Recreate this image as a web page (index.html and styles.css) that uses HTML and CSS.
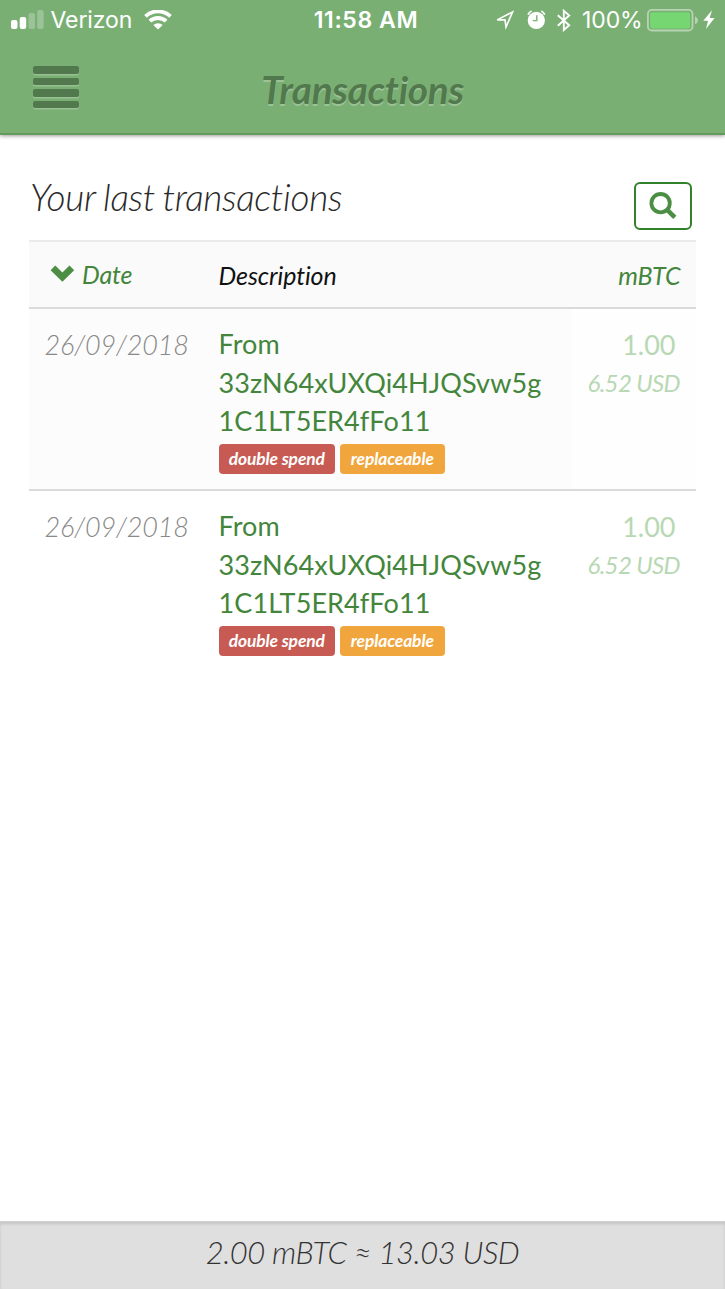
FILE: index.html
```html
<!DOCTYPE html>
<html lang="en">
<head>
<meta charset="utf-8">
<title>Transactions</title>
<link rel="stylesheet" href="styles.css">
</head>
<body>
<div class="app">
  <header class="header">
    <div class="status">
      <div class="status-left">
        <svg class="signal" width="33" height="20" viewBox="0 0 33 20" fill="#fff">
          <rect x="0" y="10" width="6.5" height="9" rx="2"/>
          <rect x="8.7" y="7" width="6.5" height="12" rx="2"/>
          <rect x="17.5" y="3" width="6.5" height="16" rx="2" opacity=".25"/>
          <rect x="26.2" y="0" width="6.5" height="19" rx="2" opacity=".25"/>
        </svg>
        <span class="carrier">Verizon</span>
        <svg class="wifi" width="28" height="20" viewBox="0 0 28 20" fill="none" stroke="#fff" stroke-width="3.8">
          <path d="M1.5 6.4A18 18 0 0 1 26.5 6.4"/>
          <path d="M5.9 11.2A11.8 11.8 0 0 1 22.1 11.2"/>
          <path d="M9.3 15.1A6.7 6.7 0 0 1 18.7 15.1L14 19.6Z" fill="#fff" stroke="none"/>
        </svg>
      </div>
      <span class="clock">11:58 AM</span>
      <div class="status-right">
        <svg class="location" width="19" height="20" viewBox="0 0 19 20" fill="none" stroke="#fff" stroke-width="1.6">
          <path d="M16.6 1.9L10 17L9 9.9H1.2Z"/>
        </svg>
        <svg class="alarm" width="19" height="20" viewBox="0 0 19 20">
          <circle cx="9.3" cy="10.4" r="8.6" fill="#fff"/>
          <path d="M9.8 5.2V10.6H5.8" fill="none" stroke="#78af73" stroke-width="1.4"/>
          <path d="M.9 4.6A8 8 0 0 1 4.6 1M14.2 1A8 8 0 0 1 17.8 4.6" fill="none" stroke="#fff" stroke-width="1.7"/>
        </svg>
        <svg class="bluetooth" width="14" height="23" viewBox="0 0 14 23" fill="none" stroke="#fff" stroke-width="1.9">
          <path d="M.8 6.2L12.2 16.2L6.8 21V1.8L12.2 6.5L.8 16.7"/>
        </svg>
        <span class="percent">100%</span>
        <svg class="battery" width="52" height="23" viewBox="0 0 52 23">
          <rect x=".9" y=".9" width="44.6" height="20.6" rx="4" fill="none" stroke="#fff" stroke-opacity=".45" stroke-width="1.8"/>
          <rect x="3.2" y="3.2" width="39.8" height="16.2" rx="2" fill="#76d672"/>
          <path d="M48 7.2Q51 8.7 51 11.2T48 15.2Z" fill="#fff" opacity=".45"/>
        </svg>
        <svg class="bolt" width="12" height="20" viewBox="0 0 12 20" fill="#fff"><path d="M9 .3L.3 10.8H5L3 19L11.6 8H6.7Z"/></svg>
      </div>
    </div>
    <div class="title-bar">
      <div class="menu"><i class="bar"></i><i class="bar"></i><i class="bar"></i><i class="bar"></i></div>
      <h1 class="title">Transactions</h1>
    </div>
  </header>
  <main class="content">
    <div class="heading">
      <h2 class="subtitle">Your last transactions</h2>
      <button class="search" aria-label="Search">
        <svg width="28" height="28" viewBox="0 0 28 28" fill="none" stroke="#4d8e45">
          <circle cx="11.6" cy="11.2" r="9.2" stroke-width="3.8"/>
          <path d="M18 17.6L25.8 25.4" stroke-width="4.6"/>
        </svg>
      </button>
    </div>
    <div class="row head">
      <div class="cell sort">
        <svg class="chevron" width="25" height="17" viewBox="0 0 25 17"><path d="M.6 5.2L5.3.5L12.4 7.5L19.5.5L24.2 5.2L12.4 16.8Z" fill="#4d8e45"/></svg>
        <span class="date-label">Date</span>
      </div>
      <div class="cell"><span class="desc-label">Description</span></div>
      <div class="cell right"><span class="unit-label">mBTC</span></div>
    </div>
    <div class="row item striped">
      <div class="cell date"><span>26/09/2018</span></div>
      <div class="cell desc">
        <div class="addr">From<br>33zN64xUXQi4HJQSvw5g<br>1C1LT5ER4fFo11</div>
        <div class="tags"><span class="tag danger">double spend</span><span class="tag warning">replaceable</span></div>
      </div>
      <div class="cell right amount"><div class="value">1.00</div><div class="fiat">6.52 USD</div></div>
    </div>
    <div class="row item">
      <div class="cell date"><span>26/09/2018</span></div>
      <div class="cell desc">
        <div class="addr">From<br>33zN64xUXQi4HJQSvw5g<br>1C1LT5ER4fFo11</div>
        <div class="tags"><span class="tag danger">double spend</span><span class="tag warning">replaceable</span></div>
      </div>
      <div class="cell right amount"><div class="value">1.00</div><div class="fiat">6.52 USD</div></div>
    </div>
  </main>
  <footer class="footer"><span class="balance">2.00 mBTC ≈ 13.03 USD</span></footer>
</div>
</body>
</html>
```
FILE: styles.css
```css
* { box-sizing: border-box; }
body { margin: 0; background: #fff; font-family: Lato, sans-serif; font-variant-ligatures: none; }
h1, h2 { margin: 0; }
svg { display: block; flex: none; }
.app { display: flex; flex-direction: column; width: 725px; height: 1289px; overflow: hidden; white-space: nowrap; }

.header { height: 135px; flex: none; background: #7aaf74; border-bottom: 2px solid #619b5b; box-shadow: 0 1px 4px rgba(0,0,0,.4); }
.status { display: grid; grid-template-columns: 270px 1fr 270px; height: 40px; align-items: center; color: #fff; font: 23px/40px Inter, sans-serif; }
.status-left, .status-right { display: flex; align-items: center; }
.status-left { padding-left: 11px; }
.carrier { width: 81px; margin-left: 6.5px; letter-spacing: -.1px; }
.wifi { margin-left: 12px; }
.clock { text-align: center; font-weight: 600; font-size: 23px; letter-spacing: .6px; padding-left: 7px; }
.status-right { padding-left: 41px; }
.alarm { margin-left: 11.5px; }
.bluetooth { margin-left: 11px; }
.percent { width: 60px; margin-left: 11.5px; font-size: 23px; letter-spacing: -.1px; }
.battery { margin-left: 5px; }
.bolt { margin-left: 4px; }

.title-bar { display: grid; grid-template-columns: 100px 1fr 100px; }
.menu { display: flex; flex-direction: column; gap: 4px; padding: 26px 0 0 33px; }
.bar { width: 46px; height: 7.6px; border-radius: 2px; background: #52784d; box-shadow: 0 1.5px 0 rgba(255,255,255,.22); }
.title { text-align: center; font-size: 38.7px; line-height: 54px; padding-top: 22px; letter-spacing: -.3px; font-style: italic; font-weight: 700; color: #52784d; text-shadow: 0 2px 0 rgba(255,255,255,.25); }

.content { flex: 1; padding: 35px 29px 0; }
.heading { display: flex; justify-content: space-between; height: 70px; }
.subtitle { font-size: 37px; line-height: 54px; letter-spacing: -.35px; word-spacing: -1px; font-weight: 300; font-style: italic; color: #2a2a2a; padding-left: 1px; }
.search { display: grid; place-items: center; width: 58px; height: 48px; margin: 12px 4px 0 0; padding: 0; background: #fff; border: 2px solid #33812a; border-radius: 6px; }

.row { display: grid; grid-template-columns: 174px 369px 124px; }
.cell { padding: 0 15.5px; }
.right { text-align: right; }
.head { height: 69px; background: #fafafa; border-top: 2px solid #eaeaea; border-bottom: 2px solid #dadada; font-size: 25px; line-height: 66px; letter-spacing: -.1px; font-style: italic; color: #111; }
.sort { display: flex; padding-left: 21px; color: #43863b; }
.chevron { margin: 23px 7px 0 0; }
.date-label { line-height: 64px; }
.unit-label { color: #43863b; }
.item { height: 182px; color: #43863b; }
.item .cell { padding-top: 16px; }
.striped { border-bottom: 2px solid #dadada; background: #fcfcfc; }
.striped .amount { background: #fefefe; }
.date { font-size: 27px; line-height: 40px; letter-spacing: -.15px; font-weight: 300; font-style: italic; color: #888; }
.addr { font-size: 27px; line-height: 38.6px; letter-spacing: .1px; }
.tags { display: flex; gap: 5px; margin-top: 3.4px; }
.tag { height: 30px; border-radius: 4px; color: #fff; font-size: 17.4px; line-height: 30px; font-weight: 700; font-style: italic; text-align: center; letter-spacing: -.1px; }
.danger { width: 116.5px; background: #c75b54; }
.warning { width: 104.5px; background: #f0a63d; }
.amount { color: #b7d8b3; }
.value { font-size: 27px; padding-right: 5px; line-height: 40px; }
.fiat { font-size: 24px; font-style: italic; line-height: 36px; letter-spacing: -.65px; padding-right: 1px; }

.footer { height: 68px; flex: none; text-align: center; background: #dfdfdf; border-top: 1px solid #d0d0d0; box-shadow: inset 0 2px 3px rgba(0,0,0,.12); font-size: 31px; line-height: 61px; letter-spacing: -.5px; font-weight: 300; font-style: italic; color: #333; }
```
